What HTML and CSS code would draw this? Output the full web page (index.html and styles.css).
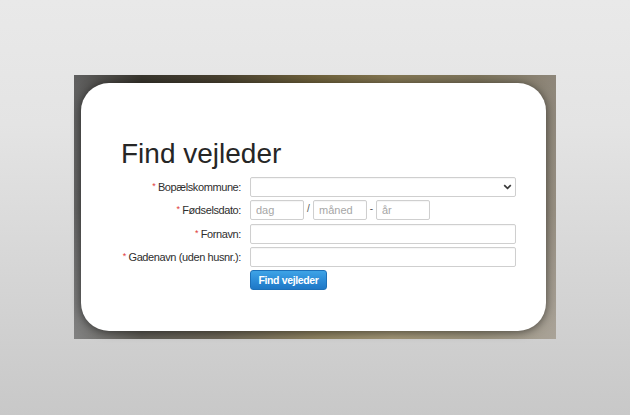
FILE: index.html
```html
<!DOCTYPE html>
<html>
<head>
    <meta charset="utf-8">
    <link rel="stylesheet" href="styles.css">
</head>
<body>
    <div class="frame">
        <div class="card">
            <h1 class="title">Find vejleder</h1>
            <form class="form">
                <label class="label"><span class="req">*</span> Bopælskommune:</label>
                <div class="select-wrap">
                    <select class="field select"><option></option></select>
                    <svg class="chevron" width="9" height="6" viewBox="0 0 9 6">
                        <path d="M1.2 1.2 L4.5 4.4 L7.8 1.2" fill="none" stroke="#3a3a3a" stroke-width="1.7"/>
                    </svg>
                </div>

                <label class="label"><span class="req">*</span> Fødselsdato:</label>
                <div class="date-row">
                    <input class="field date" type="text" placeholder="dag">
                    <span class="sep">/</span>
                    <input class="field date" type="text" placeholder="måned">
                    <span class="sep">-</span>
                    <input class="field date" type="text" placeholder="år">
                </div>

                <label class="label"><span class="req">*</span> Fornavn:</label>
                <input class="field" type="text">

                <label class="label"><span class="req">*</span> Gadenavn (uden husnr.):</label>
                <input class="field" type="text">

                <div></div>
                <div><button type="button" class="btn">Find vejleder</button></div>
            </form>
        </div>
    </div>
</body>
</html>
```

FILE: styles.css
```css
html, body {
    margin: 0;
    height: 100%;
}

body {
    background: linear-gradient(to bottom, #e9e9e9 0%, #e4e4e4 30%, #c8c8c8 100%);
    font-family: "Liberation Sans", Arial, sans-serif;
    padding-top: 75px;
    box-sizing: border-box;
}

.frame {
    width: 482px;
    height: 264px;
    margin: 0 auto;
    padding: 8px 10px 8px 7px;
    box-sizing: border-box;
    background:
        linear-gradient(to bottom, rgba(0,0,0,0.06) 0%, rgba(0,0,0,0) 50%, rgba(255,255,255,0.18) 100%),
        linear-gradient(to right, #666 0%, #3b3830 14%, #4c4432 30%, #76683f 50%, #8c7e58 66%, #857c62 84%, #978f82 100%);
}

.card {
    width: 465px;
    height: 248px;
    box-sizing: border-box;
    padding: 55px 0 0 40px;
    background: #fff;
    border-radius: 28px;
    box-shadow: 0 1px 10px rgba(0,0,0,0.55);
}

.title {
    margin: 0 0 7px;
    font-size: 28px;
    font-weight: normal;
    line-height: 32px;
    color: #262626;
}

.form {
    display: grid;
    grid-template-columns: 120px 266px;
    grid-auto-rows: 20px;
    column-gap: 9px;
    row-gap: 3.3px;
    align-items: center;
}

.label {
    text-align: right;
    font-size: 11px;
    letter-spacing: -0.4px;
    color: #2e2e2e;
    white-space: nowrap;
}

.req {
    color: #e03a3a;
    font-size: 9px;
    position: relative;
    top: -2px;
}

.field {
    display: block;
    width: 100%;
    height: 20px;
    box-sizing: border-box;
    border: 1px solid #cfcfcf;
    border-radius: 2px;
    background: #fff;
    padding: 0 5px;
    font-family: "Liberation Sans", Arial, sans-serif;
    font-size: 11px;
    color: #333;
    box-shadow: inset 0 1px 1px rgba(0,0,0,0.04);
}

.field::placeholder {
    color: #a6a6a6;
}

.select-wrap {
    position: relative;
}

.select {
    appearance: none;
    -webkit-appearance: none;
}

.chevron {
    position: absolute;
    right: 4px;
    top: 7px;
}

.date-row {
    display: flex;
    align-items: center;
}

.date {
    width: 54px;
}

.sep {
    width: 9px;
    text-align: center;
    font-size: 10px;
    color: #555;
    position: relative;
    top: -2px;
}

.btn {
    width: 77px;
    height: 20px;
    padding: 0;
    border: 1px solid #1d70b8;
    border-radius: 3px;
    background: linear-gradient(to bottom, #3ea3e6 0%, #2b8ad6 55%, #1f78c6 100%);
    color: #fff;
    font-family: "Liberation Sans", Arial, sans-serif;
    font-size: 10.5px;
    font-weight: bold;
    letter-spacing: -0.35px;
    cursor: pointer;
}
```
